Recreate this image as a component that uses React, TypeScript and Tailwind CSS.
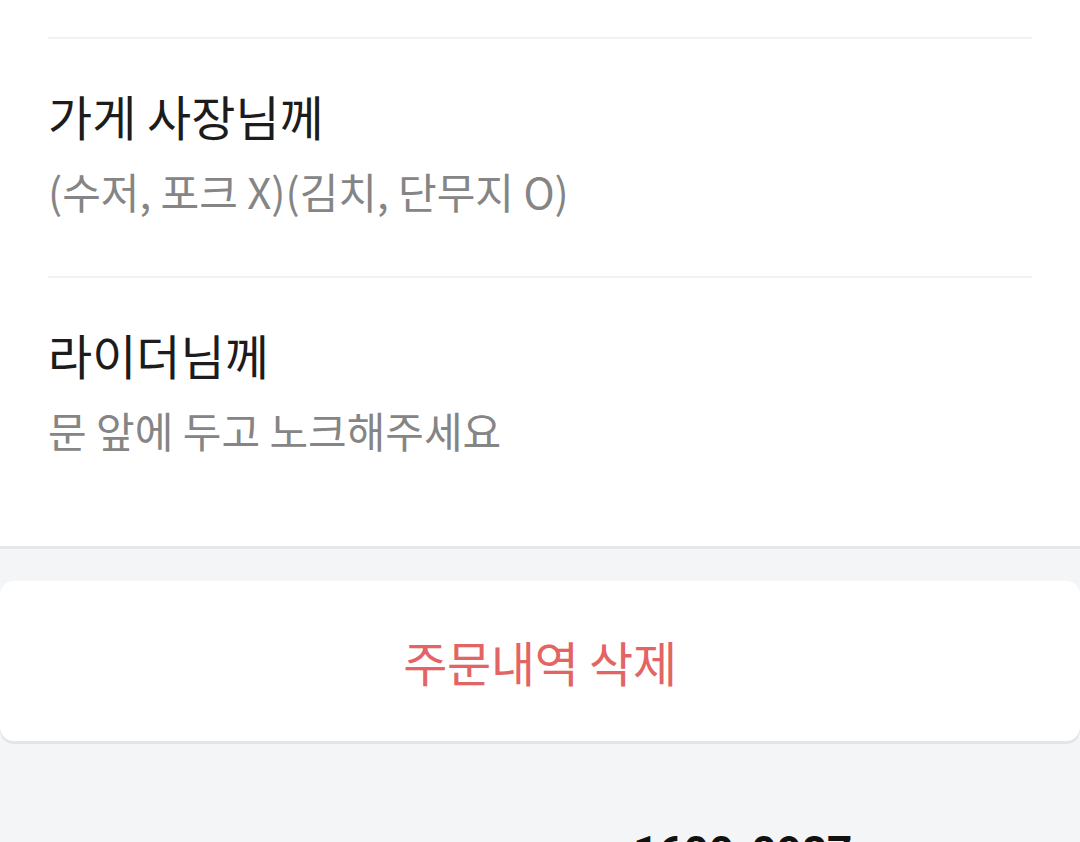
const FONT = { fontFamily: '"Noto Sans CJK KR", "Noto Sans", sans-serif' };

const REQUESTS = [
  { to: '가게 사장님께', text: '(수저, 포크 X)(김치, 단무지 O)' },
  { to: '라이더님께', text: '문 앞에 두고 노크해주세요' },
];

export default function App() {
  return (
    <div className="h-[842px] overflow-hidden bg-[#f4f5f7]" style={FONT}>
      {/* Request section */}
      <div className="bg-white border-b-[3px] border-[#e6e7e9] px-12">
        <div className="h-[37px]" />
        {REQUESTS.map((r, i) => (
          <div
            key={r.to}
            className={
              'border-t-2 border-[#f1f2f3] pt-[48px] ' +
              (i === REQUESTS.length - 1 ? 'pb-[88px]' : 'pb-[57px]')
            }
          >
            <div className="text-[48px] leading-[56px] text-[#1c1c1c]">{r.to}</div>
            <div className="mt-5 text-[42px] leading-[56px] text-[#858585]">{r.text}</div>
          </div>
        ))}
      </div>

      {/* Delete button */}
      <div className="mt-8">
        <button className="w-full h-[160px] bg-white rounded-[14px] shadow-[0_3px_0_#e4e5e8] flex items-center justify-center text-[48px] tracking-[-0.3px] text-[#e36464]">
          주문내역 삭제
        </button>
      </div>

      {/* Customer center */}
      <div className="mt-[90px] pl-[633px] flex items-baseline">
        <span className="text-[44px] leading-none font-bold text-[#111]" style={{ fontFamily: 'Roboto, "Liberation Sans", sans-serif' }}>
          1600-0987
        </span>
      </div>
    </div>
  );
}
